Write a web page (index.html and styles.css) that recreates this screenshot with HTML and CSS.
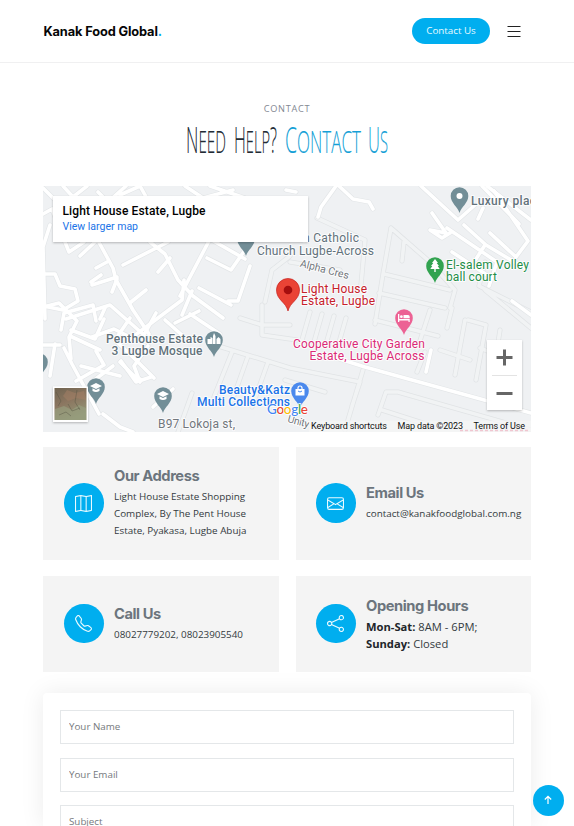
FILE: index.html
```html
<!DOCTYPE html>
<html lang="en">
<head>
<meta charset="utf-8">
<title>Kanak Food Global</title>
<link rel="stylesheet" href="styles.css">
</head>
<body>
<header class="header">
  <div class="brand">Kanak Food Global<span>.</span></div>
  <div class="actions">
    <a class="cta">Contact Us</a>
    <svg class="burger" viewBox="0 0 14 12"><path d="M.5 1.500h13M.5 6.500h13M.5 11.500h13"/></svg>
  </div>
</header>
<main class="page">
  <p class="eyebrow">CONTACT</p>
  <svg class="title" viewBox="180 120 214 42" role="heading" aria-level="2">
    <g class="ink">
      <text x="186" y="153" textLength="40" lengthAdjust="spacingAndGlyphs">N<tspan class="sc">EED</tspan></text>
      <text x="234" y="153" textLength="43" lengthAdjust="spacingAndGlyphs">H<tspan class="sc">ELP</tspan>?</text>
    </g>
    <g class="blue">
      <text x="285" y="153" textLength="76" lengthAdjust="spacingAndGlyphs">C<tspan class="sc">ONTACT</tspan></text>
      <text x="368" y="153" textLength="20" lengthAdjust="spacingAndGlyphs">U<tspan class="sc">S</tspan></text>
    </g>
  </svg>

  <svg class="map" viewBox="43 186 488 246">
    <defs>
      <g id="minor">
        <path d="M317 218l48 22-4 45M391 228l-8 46-8 50M391 228l39 34 25 28-5 18M404 242l-2 19M384 274l66 16M379 293l66 15M375 320l63 16M290 256l-18 14-7 32M290 262l50 8M430 310l-13 40"/>
        <path d="M452 308l-5 20M465 320l-10 55M468 320l18 5-10 55M480 348l20 8M500 330l-5 32M485 262l-6 24 52 26M485 290l46 38"/>
        <path d="M240 318l22 7h28M262 305v30l35 5M310 312l-8 28M322 314l-8 28M334 316l-8 28M346 318l-8 28M215 345l75 23 70 14-8 24M232 352l-18 45M248 356l-16 45M268 362l-16 45M363 370l-18 60M192 393l-14 39M285 380l40 12M378 415l8-23h12l133 38M382 410l50 16M425 352l-8 20M440 350l30 10"/>
      </g>
      <g id="roads">
        <path d="M43 188l14 14M43 214l9-5 17 43 15-10M50 225l-7 22 2 72M95 235l18 33 3 12 17 30 16 24M63 186l10 11 14-11M98 192l10 10 18-16M120 195l20-9 10 18M185 186l18 12 30-8M210 186l35 12"/>
        <path d="M80 256l16-15M150 242l15 12 13 26 15 16 30 22M123 265l45-23M180 296l30-57 35 20M184 280l-2 20-56 42M207 258l24 12 16-23M250 266l-12 35-10 0M199 288l32 17M192 291l-10 24M158 272l12-14"/>
        <path d="M43 274h12l5 12 15 3 3 12-15 9-20-4M91 282l10-7M96 268l11-6M92 285l25-8M117 279l-5 13M131 302l15-12M105 308l-5 11"/>
        <path d="M43 307l16-4 18 18-8 16 2 22M61 330l3-17 29-8 3 16M71 330l24 9 9-20M66 319l44-14 34 30 12-22M130 318l-15 22 25 24 14 14M43 345h17M55 344l-5 32M64 348l8 16 27 50M76 381l28-16-8-14M81 366l39 10M100 350l-30-14M103 414l17 13 13 5M120 362l14 14 6 6-6-16 14-20"/>
        <path d="M92 337l22-8 16 8M93 381l20-15M134 376l8 4M190 314l30 20M165 320l18 16M175 323l24-12M173 389l-20 18M121 361l15 21 15-5"/>
        <path class="wide" d="M330 356l35 11 166 46M426 372l5-22M421 186l37 34 17-15"/>
        <path d="M318 217l3-10 15-21M339 186l14 13 16 3 4 7M286 190l10 2M432 213l14 20-16-3 12 8 8-5M464 225l22 20 20 12 20 12M452 252l38 25M494 191l34 50-12 16-26-24M482 186l37 38M478 219l5-11M485 245l-9 14M512 301l19 14M447 228l50 34-8 24"/>
        <path class="wide" d="M487 186l44 34"/>
      </g>
      <path id="pin" d="M0 13C-1.600 7-8.800 3-8.800-4A8.800 8.800 0 0 1 8.800-4C8.800 3 1.600 7 0 13z"/>
      <path id="cap" d="M-6-4L0-7 6-4 0-1zM-3.500-1.800V1Q0 3 3.500 1v-2.800L0 0z"/>
      <filter id="soft" x="-10%" y="-20%" width="120%" height="150%"><feDropShadow dx="0" dy="1" stdDeviation="1.200" flood-opacity=".25"/></filter>
      <linearGradient id="land" x1="0" y1="0" x2=".4" y2="1"><stop offset="0" stop-color="#706451"/><stop offset=".5" stop-color="#8b7660"/><stop offset="1" stop-color="#929475"/></linearGradient>
    </defs>
    <rect class="ground" x="43" y="186" width="488" height="246"/>
    <use href="#minor" class="minor-edge"/><use href="#minor" class="minor"/>
    <use href="#roads" class="road-edge"/><use href="#roads" class="road"/>

    <g class="slate">
      <use href="#pin" x="459.500" y="200"/><use href="#pin" x="246" y="243"/>
      <use href="#pin" x="214" y="344"/><use href="#pin" x="96" y="391"/>
      <use href="#pin" x="163" y="400"/><use href="#pin" x="39" y="366"/>
    </g>
    <circle class="white" cx="459.500" cy="196" r="3"/>
    <path class="white" d="M207.500 344v-5h3v-2l2 1v6zM213 344v-8l1-3 1.500 3v8zM216.500 344v-5l2-2 2 2v5z"/>
    <use href="#cap" class="white" x="96" y="390"/><use href="#cap" class="white" x="163" y="398"/>
    <use href="#pin" x="435" y="270" fill="#32a350"/>
    <path class="white" d="M435 259l3 4h-1.300l2.300 3h-1.300l2 3h-4v3h-1.400v-3h-4l2-3h-1.300l2.300-3h-1.300z"/>
    <use href="#pin" x="404" y="322" fill="#ec6294"/>
    <path class="white" d="M398 314h1.300v5h10.400v3h-1.200v-1.500h-9.200v1.500H398zM403.500 315h4.500q1.700 0 1.700 1.700v1.500h-6.200z"/><circle class="white" cx="401.400" cy="316.700" r="1.400"/>
    <use href="#pin" x="300" y="395" fill="#4b89ed"/>
    <path class="white" d="M295.500 389h9v6.500h-9z"/><path class="bag" d="M298 389v-1a2 2 0 0 1 4 0v1"/><path d="M298 391q2 2 4 0" fill="none" stroke="#4b89ed"/>
    <path d="M288 311c-2-9-11.500-11-11.500-21a11.500 11.500 0 0 1 23 0c0 10-9.500 12-11.500 21z" fill="#ea4335" stroke="#c5221f" stroke-width=".7"/>
    <circle cx="288" cy="290" r="4.300" fill="#a50e0e"/>

    <g class="label">
      <text class="strong" x="471" y="205" textLength="65">Luxury plac</text>
      <text x="303" y="242" textLength="56">n Catholic</text>
      <text x="257" y="254.500" textLength="117">Church Lugbe-Across</text>
      <text class="strong" x="106" y="343" textLength="97">Penthouse Estate</text>
      <text class="strong" x="111.500" y="355" textLength="91">3 Lugbe Mosque</text>
      <text class="gray" x="158" y="427.500" textLength="77">B97 Lokoja st,</text>
      <text class="gray small" transform="translate(299.500 266.500) rotate(14.500)" textLength="50">Alpha Cres</text>
      <text class="gray small" transform="translate(287 422) rotate(15)" textLength="22">Unity</text>
      <g class="green"><text x="446" y="269" textLength="83">El-salem Volley</text><text x="446" y="281" textLength="51">ball court</text></g>
      <g class="red"><text x="301" y="293" textLength="66">Light House</text><text x="301" y="305" textLength="74">Estate, Lugbe</text></g>
      <g class="pink"><text x="293" y="348" textLength="132">Cooperative City Garden</text><text x="309.500" y="360" textLength="115">Estate, Lugbe Across</text></g>
      <g class="shop"><text x="219" y="394" textLength="71">Beauty&amp;Katz</text><text x="197" y="406" textLength="93">Multi Collections</text></g>
    </g>
    <text class="google" x="267" y="413.500" textLength="41"><tspan fill="#4285f4">G</tspan><tspan fill="#ea4335">o</tspan><tspan fill="#fbbc04">o</tspan><tspan fill="#4285f4">g</tspan><tspan fill="#34a853">l</tspan><tspan fill="#ea4335">e</tspan></text>

    <rect class="panel" x="53" y="196" width="255" height="46"/>
    <text class="place" x="62.500" y="215" textLength="143">Light House Estate, Lugbe</text>
    <text class="larger" x="62.500" y="230" textLength="75.500">View larger map</text>

    <rect class="panel" x="487" y="340" width="35" height="70"/>
    <path d="M492 375.500h25" stroke="#e3e3e3"/>
    <path d="M496.500 357.500h16M504.500 349.500v16M496.500 393.500h16" stroke="#666" stroke-width="3"/>

    <rect class="panel" x="53" y="386.500" width="35" height="35.500"/>
    <rect x="54.500" y="388" width="32" height="32" fill="url(#land)"/>
    <path d="M67 390l8 3 9-2 2 9-10-2-8 3-5-5z" fill="#a57f66" opacity=".5"/>
    <path d="M55 409l9-3 8 4 7-5 7 3v12H55z" fill="#98a080" opacity=".65"/>
    <path d="M56 392l5 9-3 5M68 404l4 7 8-3M59 415l7-3 5 4M77 390l-2 12 5 8" fill="none" stroke="#514f3f" opacity=".4"/>

    <path d="M309 420.500h222V432H309z" fill="#f5f5f5" opacity=".75"/>
    <path d="M460 430.500h70" stroke="#efa8b8" stroke-width="1.500" stroke-dasharray="3 2" opacity=".6"/>
    <g class="legal">
      <text x="311" y="429" textLength="76">Keyboard shortcuts</text>
      <text x="397.500" y="429" textLength="65.500">Map data ©2023</text>
      <text x="473.500" y="429" textLength="51.500">Terms of Use</text>
    </g>
  </svg>

  <section class="cards">
    <article class="card">
      <span class="disc"><svg viewBox="0 0 16 16"><path fill-rule="evenodd" d="M15.817.113A.5.5 0 0 1 16 .5v14a.5.5 0 0 1-.402.490l-5 1a.502.502 0 0 1-.196 0L5.500 15.010l-4.902.980A.5.5 0 0 1 0 15.500v-14a.5.5 0 0 1 .402-.490l5-1a.5.5 0 0 1 .196 0L10.500.990l4.902-.980a.5.5 0 0 1 .415.103zM10 1.910l-4-.800v12.980l4 .800V1.910zm1 12.980 4-.800V1.110l-4 .800v12.980zm-6-.800V1.110l-4 .800v12.980l4-.800z"/></svg></span>
      <div class="info"><h3>Our Address</h3><p>Light House Estate Shopping Complex, By The Pent House Estate, Pyakasa, Lugbe Abuja</p></div>
    </article>
    <article class="card">
      <span class="disc"><svg viewBox="0 0 16 16"><path d="M0 4a2 2 0 0 1 2-2h12a2 2 0 0 1 2 2v8a2 2 0 0 1-2 2H2a2 2 0 0 1-2-2V4zm2-1a1 1 0 0 0-1 1v.217l7 4.200 7-4.200V4a1 1 0 0 0-1-1H2zm13 2.383-4.708 2.825L15 11.105V5.383zm-.034 6.876-5.640-3.471L8 9.583l-1.326-.795-5.640 3.470A1 1 0 0 0 2 13h12a1 1 0 0 0 .966-.741zM1 11.105l4.708-2.897L1 5.383v5.722z"/></svg></span>
      <div class="info"><h3>Email Us</h3><p>contact@kanakfoodglobal.com.ng</p></div>
    </article>
    <article class="card">
      <span class="disc"><svg viewBox="0 0 16 16"><path d="M3.654 1.328a.678.678 0 0 0-1.015-.063L1.605 2.300c-.483.484-.661 1.169-.450 1.770a17.568 17.568 0 0 0 4.168 6.608 17.569 17.569 0 0 0 6.608 4.168c.601.211 1.286.033 1.770-.450l1.034-1.034a.678.678 0 0 0-.063-1.015l-2.307-1.794a.678.678 0 0 0-.580-.122l-2.190.547a1.745 1.745 0 0 1-1.657-.459L5.482 8.062a1.745 1.745 0 0 1-.460-1.657l.548-2.190a.678.678 0 0 0-.122-.580L3.654 1.328zM1.884.511a1.745 1.745 0 0 1 2.612.163L6.290 2.980c.329.423.445.974.315 1.494l-.547 2.190a.678.678 0 0 0 .178.643l2.457 2.457a.678.678 0 0 0 .644.178l2.189-.547a1.745 1.745 0 0 1 1.494.315l2.306 1.794c.829.645.905 1.870.163 2.611l-1.034 1.034c-.740.740-1.846 1.065-2.877.702a18.634 18.634 0 0 1-7.010-4.420 18.634 18.634 0 0 1-4.420-7.009c-.362-1.030-.037-2.137.703-2.877L1.885.511z"/></svg></span>
      <div class="info"><h3>Call Us</h3><p>08027779202, 08023905540</p></div>
    </article>
    <article class="card">
      <span class="disc"><svg viewBox="0 0 16 16"><path d="M13.500 1a1.500 1.500 0 1 0 0 3 1.500 1.500 0 0 0 0-3zM11 2.500a2.500 2.500 0 1 1 .603 1.628l-6.718 3.120a2.499 2.499 0 0 1 0 1.504l6.718 3.120a2.500 2.500 0 1 1-.488.876l-6.718-3.120a2.500 2.500 0 1 1 0-3.256l6.718-3.120A2.500 2.500 0 0 1 11 2.500zm-8.500 4a1.500 1.500 0 1 0 0 3 1.500 1.500 0 0 0 0-3zm11 5.500a1.500 1.500 0 1 0 0 3 1.500 1.500 0 0 0 0-3z"/></svg></span>
      <div class="info hours"><h3>Opening Hours</h3><p><b>Mon-Sat:</b> 8AM - 6PM;<br><b>Sunday:</b> Closed</p></div>
    </article>
  </section>

  <form class="form">
    <input type="text" placeholder="Your Name">
    <input type="email" placeholder="Your Email">
    <input type="text" placeholder="Subject">
  </form>
</main>
<a class="to-top"><svg viewBox="0 0 10 10"><path d="M5 9V1.500M1.800 4.500L5 1.300l3.200 3.200"/></svg></a>
</body>
</html>
```
FILE: styles.css
```css
* { box-sizing: border-box; }
html, body { height: 826px; overflow: hidden; }
body { margin: 0; background: #fff; color: #212529; font-family: "Open Sans", sans-serif; }
h3, p { margin: 0; }

.header { height: 63px; border-bottom: 1px solid #f0f0f1; padding: 0 53px 0 43.5px; display: flex; align-items: center; justify-content: space-between; }
.brand { font: 700 12.8px Inter, sans-serif; letter-spacing: -.13px; color: #060606; }
.brand span { color: #00aeef; }
.actions { display: flex; align-items: center; gap: 17px; }
.cta { width: 78px; height: 26px; border-radius: 13px; background: #00aeef; color: #e9faff; font-size: 9.8px; line-height: 26px; text-align: center; }
.burger { width: 14px; height: 12px; fill: none; stroke: #222; stroke-width: 1.1; }

.page { width: 488px; margin: 0 auto; display: flex; flex-direction: column; }
.eyebrow { margin-top: 38px; height: 16px; line-height: 16px; font-size: 9.2px; letter-spacing: .7px; text-align: center; color: #838893; }
.title { width: 214px; height: 42px; margin: 3px auto 0; overflow: visible; font: 300 36px "Open Sans", sans-serif; }
.title .sc { font-size: 32px; }
.ink { fill: #222b35; stroke: #222b35; stroke-width: .1; }
.blue { fill: #159fd6; stroke: #159fd6; stroke-width: .1; }

.map { width: 488px; height: 246px; margin-top: 24px; font-family: Roboto, sans-serif; }
.ground { fill: #eff1f3; }
.minor, .minor-edge, .road, .road-edge { fill: none; stroke-linejoin: round; stroke-linecap: round; }
.minor-edge { stroke: #e0e3e5; stroke-width: 5; }
.minor { stroke: #f1f3f4; stroke-width: 3.6; }
.road-edge { stroke: #e2e5e7; stroke-width: 4.8; }
.road { stroke: #fff; stroke-width: 3.6; }
.slate { fill: #728e97; }
.white { fill: #fff; }
.bag { fill: none; stroke: #fff; stroke-width: 1.2; }
.label { font-size: 12px; fill: #62727b; stroke: #fff; stroke-width: 2px; stroke-opacity: .8; paint-order: stroke; stroke-linejoin: round; }
.label .strong { font-weight: 500; }
.label .gray { fill: #72777c; }
.label .small { font-size: 10.5px; }
.label .green { fill: #238d47; }
.label .red { fill: #c6212b; }
.label .pink { fill: #db2b77; }
.label .shop { fill: #1a73e8; font-weight: 500; }
.google { font: 500 13.5px Lato, sans-serif; stroke: #fff; stroke-width: 1.5px; paint-order: stroke; }
.panel { fill: #fff; filter: url(#soft); }
.place { font-size: 12px; font-weight: 500; fill: #000; }
.larger { font-size: 10.5px; fill: #1a73e8; }
.legal { font-size: 9px; fill: #111; }

.cards { margin-top: 15px; display: grid; grid-template-columns: 1fr 1fr; grid-template-rows: 113px 96px; gap: 16px 17px; }
.card { background: #f4f4f4; display: flex; align-items: center; gap: 10.5px; padding: 0 0 1px 21px; min-width: 0; }
.card:nth-child(even) { padding-left: 20.5px; }
.disc { flex: none; width: 39.5px; height: 39.5px; border-radius: 50%; background: #00aeef; display: grid; place-items: center; }
.disc svg { width: 17px; height: 17px; fill: #e9faff; }
.info { padding-right: 7px; padding-bottom: 1px; }
.card h3 { font: 700 14.7px/20px Inter, sans-serif; letter-spacing: -.42px; color: #6c757d; margin-bottom: 2px; }
.info p { font-size: 9.85px; line-height: 17px; color: #333a40; }
.info.hours { padding-bottom: 0; }
.info.hours p { font-size: 11.2px; }
.hours b { color: #212529; }

.form { margin-top: 21px; padding: 17px; height: 133px; flex: none; border-radius: 4px 4px 0 0; background: #fff; box-shadow: 0 0 25px rgba(0, 0, 0, .08); display: flex; flex-direction: column; gap: 13.7px; overflow: hidden; }
.form input { flex: none; width: 100%; height: 34px; border: 1px solid #e4e7e9; border-radius: 0; padding: 0 8px 1px; font: 9.8px "Open Sans", sans-serif; color: #333; outline: none; }
.form input::placeholder { color: #75797d; opacity: 1; }

.to-top { position: absolute; left: 532.5px; top: 784.5px; width: 31px; height: 31px; border-radius: 50%; background: #00aeef; display: grid; place-items: center; }
.to-top svg { width: 10px; height: 10px; fill: none; stroke: #fff; stroke-width: 1.2; }
```
